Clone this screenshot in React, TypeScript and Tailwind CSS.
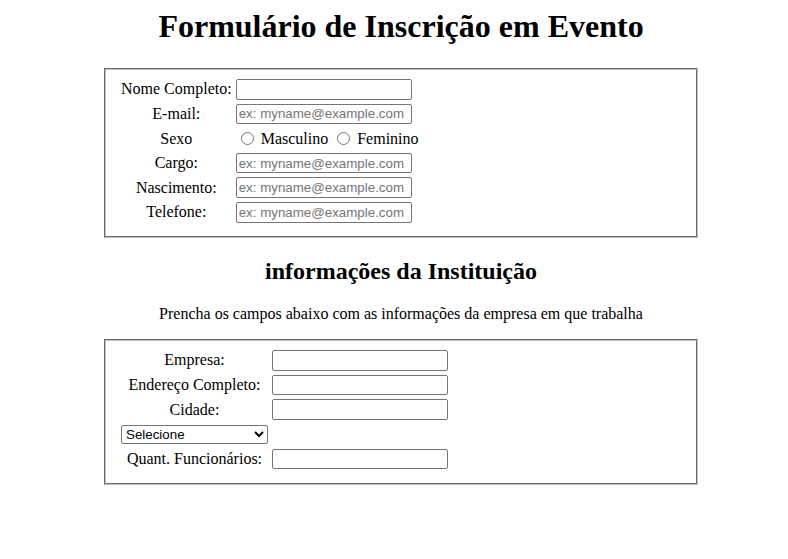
import React from 'react';

const inputCls =
  "w-[176px] h-[20.6px] border border-[#767676] rounded-[2px] bg-white px-[2px] font-['Liberation_Sans',Arial,sans-serif] text-[13.33px] text-black placeholder:text-[#757575] align-middle";

const tdLabel = 'p-[1px] text-center align-middle whitespace-nowrap';
const tdField = 'p-[1px] text-left align-middle whitespace-nowrap';

const personalRows = [
  { label: 'Nome Completo:', placeholder: '' },
  { label: 'E-mail:', placeholder: 'ex: myname@example.com' },
];

const personalRows2 = [
  { label: 'Cargo:', placeholder: 'ex: myname@example.com' },
  { label: 'Nascimento:', placeholder: 'ex: myname@example.com' },
  { label: 'Telefone:', placeholder: 'ex: myname@example.com' },
];

const App: React.FC = () => {
  return (
    <div className="min-h-[559px] bg-white text-black font-['Liberation_Serif','Times_New_Roman',serif] text-[16px] leading-[normal] pt-[8px]">
      <div className="ml-[102px] w-[598px]">
        <h1 className="text-center text-[32px] font-bold leading-[normal]">
          Formulário de Inscrição em Evento
        </h1>

        <fieldset className="mt-[23.4px] mx-[2px] border-2 [border-style:groove] border-[#c0c0c0] pt-[5.6px] px-[12px] pb-[10px]">
          <table className="border-separate border-spacing-[2px]">
            <tbody>
              {personalRows.map((r) => (
                <tr key={r.label}>
                  <td className={tdLabel}>{r.label}</td>
                  <td className={tdField}>
                    <input type="text" placeholder={r.placeholder} className={inputCls} />
                  </td>
                </tr>
              ))}
              <tr>
                <td className={tdLabel + ' h-[22.6px]'}>Sexo</td>
                <td className={tdField + ' h-[22.6px]'}>
                  <input type="radio" name="sexo" className="mt-[3px] mr-[3px] ml-[5px] align-[-1px] w-[13px] h-[13px]" />
                  <span> Masculino </span>
                  <input type="radio" name="sexo" className="mt-[3px] mr-[3px] ml-[5px] align-[-1px] w-[13px] h-[13px]" />
                  <span> Feminino</span>
                </td>
              </tr>
              {personalRows2.map((r) => (
                <tr key={r.label}>
                  <td className={tdLabel}>{r.label}</td>
                  <td className={tdField}>
                    <input type="text" placeholder={r.placeholder} className={inputCls} />
                  </td>
                </tr>
              ))}
            </tbody>
          </table>
        </fieldset>

        <h2 className="mt-[19.9px] text-center text-[24px] font-bold leading-[normal]">
          informações da Instituição
        </h2>
        <p className="mt-[20.9px] text-center leading-[normal]">
          Prencha os campos abaixo com as informações da empresa em que trabalha
        </p>

        <fieldset className="mt-[16px] mx-[2px] border-2 [border-style:groove] border-[#c0c0c0] pt-[5.6px] px-[12px] pb-[11px]">
          <table className="border-separate border-spacing-[2px]">
            <tbody>
              {['Empresa:', 'Endereço Completo:', 'Cidade:'].map((l) => (
                <tr key={l}>
                  <td className={tdLabel}>{l}</td>
                  <td className={tdField}>
                    <input type="text" className={inputCls} />
                  </td>
                </tr>
              ))}
              <tr>
                <td className="p-[1px] h-[22.6px] text-left align-middle">
                  <select className="w-[147px] h-[19px] border border-[#767676] rounded-[2px] bg-white font-['Liberation_Sans',Arial,sans-serif] text-[13.33px] text-black align-middle">
                    <option>Selecione</option>
                    <option>Até 10 funcionários</option>
                    <option>De 11 a 50</option>
                    <option>Mais de 50</option>
                  </select>
                </td>
                <td className="p-[1px]"></td>
              </tr>
              <tr>
                <td className={tdLabel}>Quant. Funcionários:</td>
                <td className={tdField}>
                  <input type="text" className={inputCls} />
                </td>
              </tr>
            </tbody>
          </table>
        </fieldset>
      </div>
    </div>
  );
};

export default App;
